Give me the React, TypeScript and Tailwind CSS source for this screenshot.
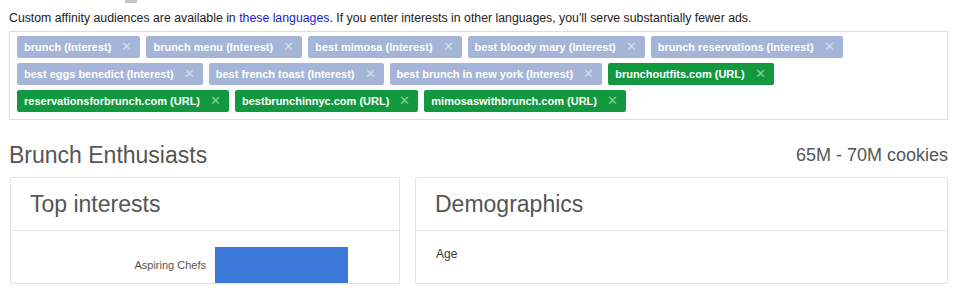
import React from 'react';

type Tag = { label: string; kind: 'interest' | 'url' };

const tags: Tag[] = [
  { label: 'brunch (Interest)', kind: 'interest' },
  { label: 'brunch menu (Interest)', kind: 'interest' },
  { label: 'best mimosa (Interest)', kind: 'interest' },
  { label: 'best bloody mary (Interest)', kind: 'interest' },
  { label: 'brunch reservations (Interest)', kind: 'interest' },
  { label: 'best eggs benedict (Interest)', kind: 'interest' },
  { label: 'best french toast (Interest)', kind: 'interest' },
  { label: 'best brunch in new york (Interest)', kind: 'interest' },
  { label: 'brunchoutfits.com (URL)', kind: 'url' },
  { label: 'reservationsforbrunch.com (URL)', kind: 'url' },
  { label: 'bestbrunchinnyc.com (URL)', kind: 'url' },
  { label: 'mimosaswithbrunch.com (URL)', kind: 'url' },
];

const TagChip = ({ tag }: { tag: Tag }) => (
  <span
    className={
      tag.kind === 'interest'
        ? 'flex items-center h-[22px] pl-[7px] pr-[8px] rounded-[2px] bg-[#a5b5d7] text-white text-[11px] font-bold'
        : 'flex items-center h-[22px] pl-[7px] pr-[8px] rounded-[2px] bg-[#12983f] text-white text-[11px] font-bold'
    }
  >
    {tag.label}
    <span
      className={
        tag.kind === 'interest'
          ? 'ml-[10px] text-[13px] font-normal text-[#d3dbec]'
          : 'ml-[10px] text-[13px] font-normal text-[#8ccc9f]'
      }
    >
      ✕
    </span>
  </span>
);

const Card = ({ title, children, className }: { title: string; children: React.ReactNode; className?: string }) => (
  <div className={'border border-[#e3e3e3] rounded-[2px] bg-white ' + (className ?? '')}>
    <div className="h-[53px] flex items-center px-[19px] border-b border-[#e3e3e3] text-[23px] text-[#555]">
      {title}
    </div>
    <div>{children}</div>
  </div>
);

export default function App() {
  return (
    <div
      className="w-[960px] h-[288px] overflow-hidden bg-white px-[9px] relative"
      style={{ fontFamily: '"Liberation Sans", Arial, sans-serif' }}
    >
      <div className="absolute left-[125px] top-0 w-[12px] h-[3px] bg-[#c4c4c4]" />
      <p className="pt-[10px] text-[12.3px] leading-[16px] text-[#222]">
        Custom affinity audiences are available in{' '}
        <span className="text-[#1a1ad0]">these languages</span>. If you enter interests in other languages,
        you'll serve substantially fewer ads.
      </p>
      <div className="mt-[5px] w-[939px] border border-[#dddddd] pt-[4px] pb-[7px] pl-[7px] pr-[6px] flex flex-wrap gap-x-[6px] gap-y-[5px]">
        {tags.map((t) => (
          <TagChip key={t.label} tag={t} />
        ))}
      </div>
      <div className="mt-[22px] flex items-center justify-between w-[939px] text-[#555]">
        <span className="text-[23px] leading-[26px]">Brunch Enthusiasts</span>
        <span className="text-[18px] leading-[26px]">65M - 70M cookies</span>
      </div>
      <div className="mt-[9px] flex gap-[15px] w-[939px] pl-[1px]">
        <Card title="Top interests" className="w-[390px]">
          <div className="flex items-center pt-[16px]">
            <span className="w-[204px] text-right text-[11px] text-[#555] pr-[9px]">Aspiring Chefs</span>
            <div className="w-[133px] h-[36px] bg-[#3c78d8]" />
          </div>
        </Card>
        <Card title="Demographics" className="flex-1">
          <div className="px-[20px] pt-[14px] text-[12px] text-[#333]">Age</div>
        </Card>
      </div>
    </div>
  );
}
